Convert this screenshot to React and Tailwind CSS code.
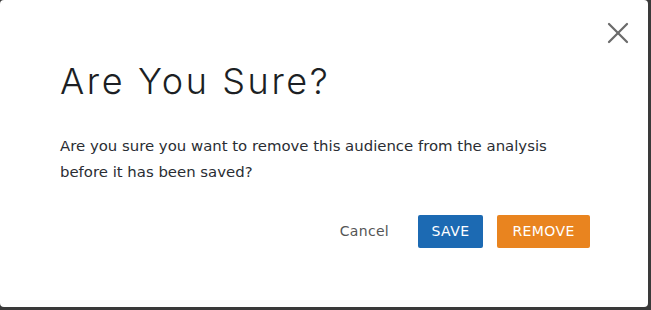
import { X } from 'lucide-react';

export default function App() {
  return (
    <div className="w-[651px] h-[310px] bg-[#3a3a3a]" style={{ fontFamily: '"DejaVu Sans", sans-serif' }}>
      <div className="relative w-[648px] h-[307px] bg-white rounded-[4px] px-[60px] pt-[57px]">
        <button className="absolute right-[12px] top-[15px] text-[#6b6b6b]">
          <X size={36} strokeWidth={1.5} />
        </button>
        <h1 className="font-['Inter',sans-serif] text-[36px] font-light leading-[48px] text-[#1c1f24] tracking-[2.6px]">Are You Sure?</h1>
        <p className="mt-[28px] text-[14.9px] leading-[26px] text-[#2a2d33] w-[500px]">
          Are you sure you want to remove this audience from the analysis before it has been saved?
        </p>
        <div className="flex items-center justify-end mt-[30px] -mr-[2px]">
          <button className="text-[14px] text-[#555] mr-[29px] tracking-[0.3px]">Cancel</button>
          <button className="h-[33px] w-[65px] rounded-[2px] bg-[#1c6ab3] text-white text-[14px] tracking-[0.4px]">SAVE</button>
          <button className="h-[33px] w-[93px] ml-[14px] rounded-[2px] bg-[#e9841f] text-white text-[14px] tracking-[0.4px]">REMOVE</button>
        </div>
      </div>
    </div>
  );
}
